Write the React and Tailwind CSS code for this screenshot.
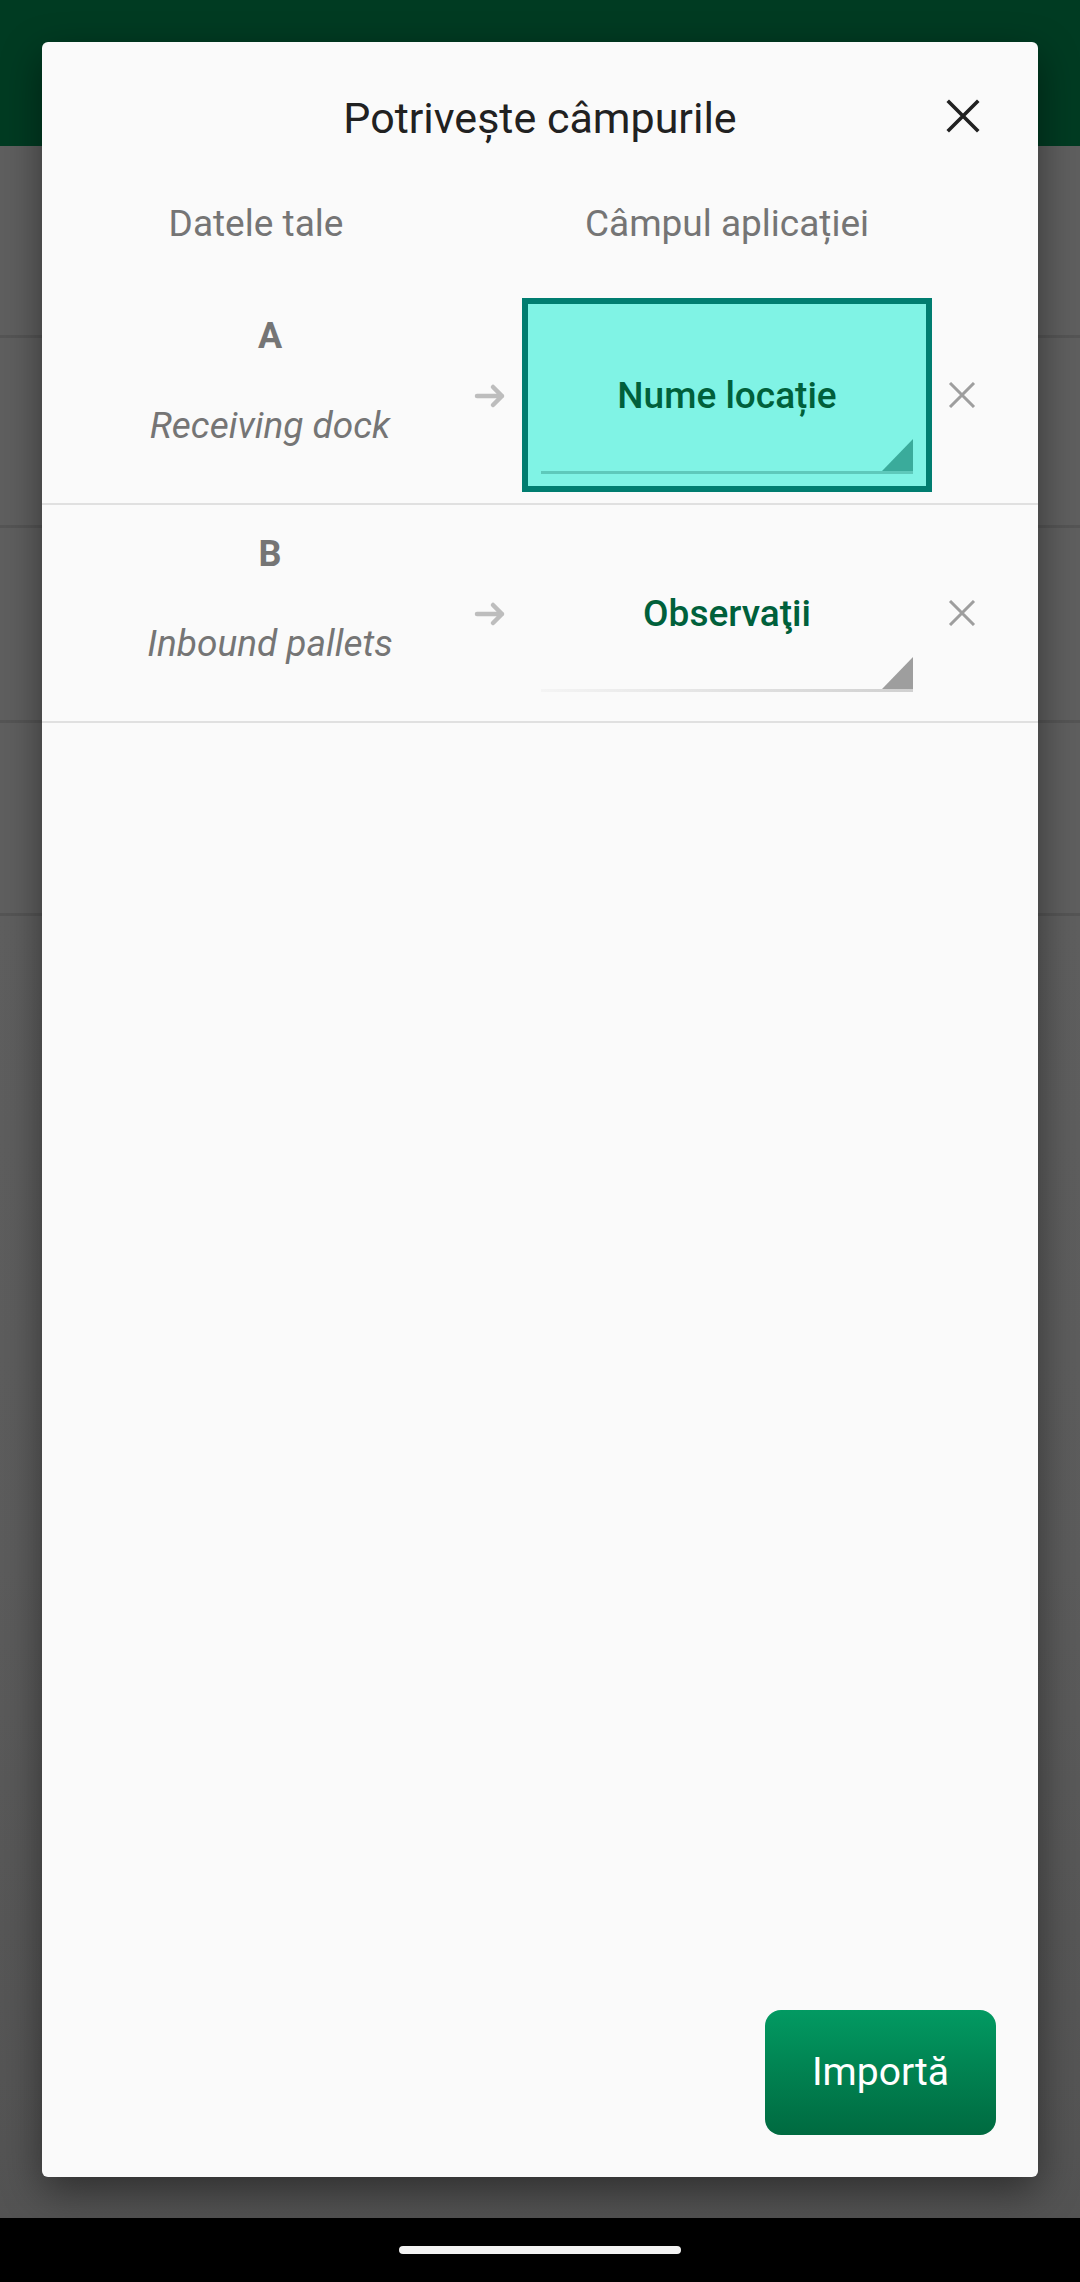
// Field-matching dialog shown over a dimmed list screen.

const ROWS = [
  { letter: 'A', label: 'Receiving dock', field: 'Nume locație', active: true },
  { letter: 'B', label: 'Inbound pallets', field: 'Observaţii', active: false },
];

function CloseIcon() {
  return (
    <svg width="34" height="34" viewBox="0 0 34 34" fill="none">
      <path d="M3 3 L31 31 M31 3 L3 31" stroke="#212121" strokeWidth="3.6" strokeLinecap="square" />
    </svg>
  );
}

function ArrowIcon() {
  return (
    <svg width="32" height="26" viewBox="0 0 32 26" fill="none">
      <path d="M3 13 H28 M19 4 L28 13 L19 22" stroke="#bdbdbd" strokeWidth="4.5" strokeLinecap="round" strokeLinejoin="round" />
    </svg>
  );
}

function RemoveIcon() {
  return (
    <svg width="28" height="26" viewBox="0 0 28 26" fill="none">
      <path d="M2 1 L26 25 M26 1 L2 25" stroke="#9e9e9e" strokeWidth="3" />
    </svg>
  );
}

function FieldSelect({ text, active }) {
  return (
    <div
      className={
        'mt-[11px] h-[194px] w-[410px] border-[6px] flex flex-col ' +
        (active ? 'border-[#007d70] bg-[#80f3e5]' : 'border-transparent')
      }
    >
      <div className="pt-[70px] text-center text-[37px] leading-[44px] font-medium text-[#00603b]">{text}</div>
      <div className="mt-[21px] mx-[13px] flex justify-end">
        <svg width="31" height="32" viewBox="0 0 31 32">
          <path d="M31 0 L31 32 L0 32 Z" fill={active ? '#3aab9b' : '#9e9e9e'} />
        </svg>
      </div>
      <div
        className={
          'mx-[13px] h-[3px] ' +
          (active ? 'bg-[#5ec9bb]' : 'bg-gradient-to-r from-[#f4f4f4] to-[#d0d0d0]')
        }
      />
    </div>
  );
}

function MappingRow({ row }) {
  return (
    <div className="h-[218px] border-b-2 border-[#e0e0e0] flex pl-[24px]">
      <div className="w-[408px] flex flex-col items-center text-[#757575]">
        <div className="pt-[29px] text-[36px] leading-[40px] font-bold">{row.letter}</div>
        <div className="mt-[50px] text-[37px] leading-[40px] italic">{row.label}</div>
      </div>
      <div className="w-[32px] pt-[96px]">
        <ArrowIcon />
      </div>
      <div className="ml-[16px]">
        <FieldSelect text={row.field} active={row.active} />
      </div>
      <div className="w-[60px] flex justify-center pt-[95px]">
        <RemoveIcon />
      </div>
    </div>
  );
}

export default function App() {
  return (
    <div
      className="relative w-[1080px] h-[2282px] flex flex-col bg-[#5f5f5f] overflow-hidden"
      style={{ fontFamily: 'Roboto, "Noto Sans", sans-serif' }}
    >
      {/* dimmed page behind the dialog */}
      <div className="flex-1 flex flex-col">
        <div className="h-[146px] bg-[#003b22]" />
        <div className="h-[192px] border-b-[3px] border-[#555555]" />
        <div className="h-[190px] border-b-[3px] border-[#555555]" />
        <div className="h-[195px] border-b-[3px] border-[#555555]" />
        <div className="h-[193px] border-b-[3px] border-[#555555]" />
        <div className="flex-1 bg-gradient-to-b from-[#5f5f5f] via-[#5c5c5c] to-[#535353]" />
      </div>

      {/* system nav bar */}
      <div className="h-[64px] bg-black flex items-center justify-center">
        <div className="w-[282px] h-[8px] rounded-full bg-[#f2f2f2]" />
      </div>

      {/* dialog */}
      <div className="absolute left-[42px] top-[42px] w-[996px] h-[2135px] rounded-[6px] bg-[#fafafa] flex flex-col shadow-[0_14px_40px_rgba(0,0,0,0.45)]">
        <div className="relative h-[152px] flex items-center justify-center">
          <h1 className="text-[43px] leading-[48px] text-[#212121]">Potrivește câmpurile</h1>
          <button className="absolute right-[58px] top-[57px]">
            <CloseIcon />
          </button>
        </div>

        <div className="h-[60px] mb-[33px] flex items-center text-[37px] text-[#757575]">
          <div className="w-[428px] text-center">Datele tale</div>
          <div className="ml-[52px] w-[410px] text-center">Câmpul aplicației</div>
        </div>

        {ROWS.map((row) => (
          <MappingRow key={row.letter} row={row} />
        ))}

        <div className="flex-1" />

        <div className="flex justify-end pr-[42px] pb-[42px]">
          <button className="w-[231px] h-[125px] rounded-[16px] bg-gradient-to-b from-[#029a62] to-[#006a40] text-white text-[39px]">
            Importă
          </button>
        </div>
      </div>
    </div>
  );
}
